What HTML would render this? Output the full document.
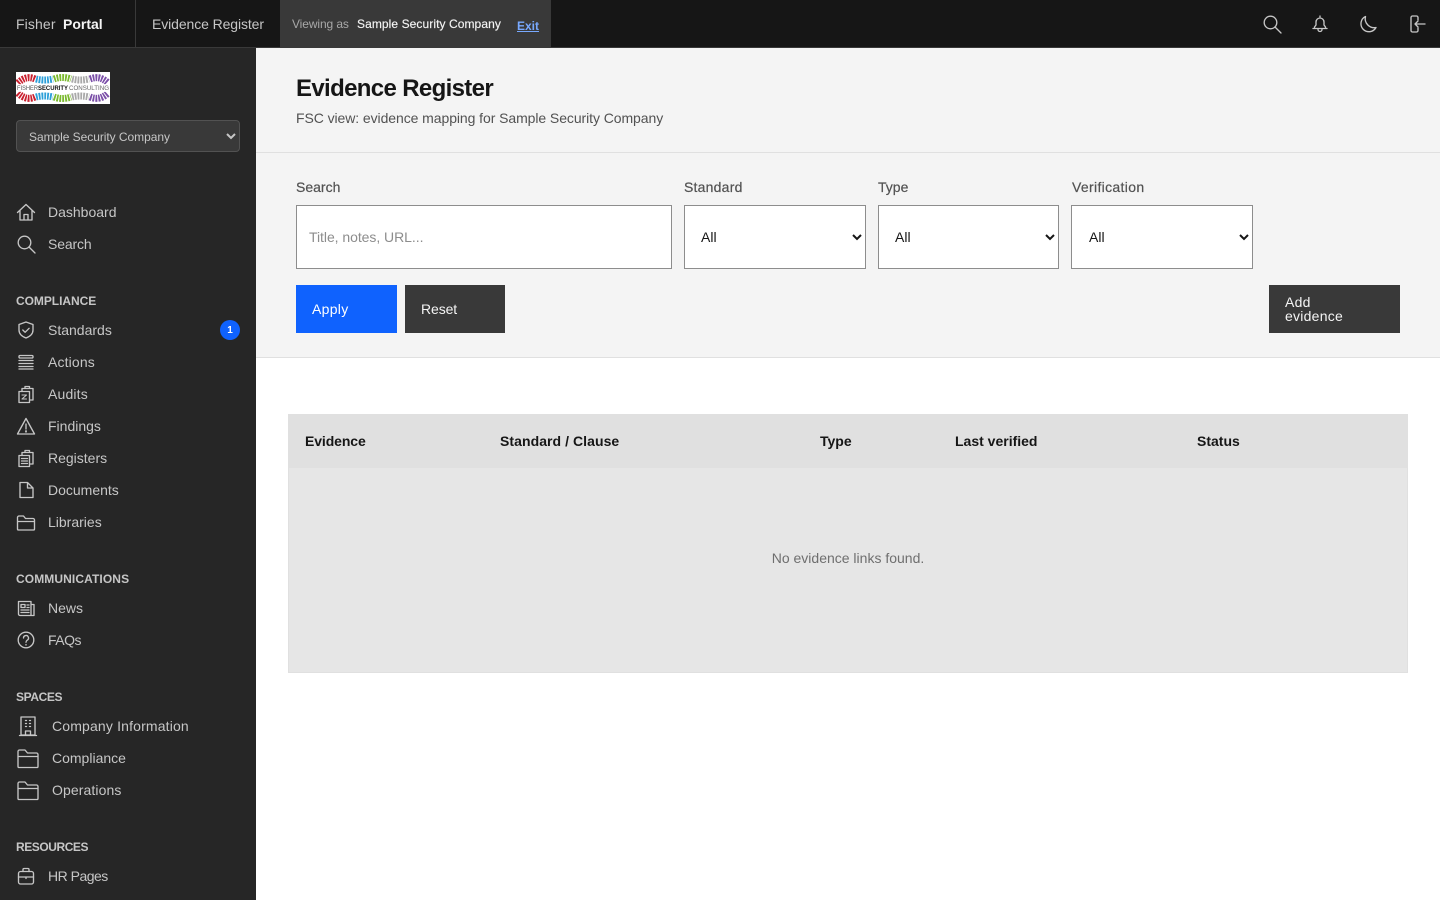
<!DOCTYPE html>
<html lang="en"><head><meta charset="utf-8"><title>Evidence Register</title>
<style>
*{box-sizing:border-box}
html,body{margin:0;padding:0;width:1440px;height:900px;overflow:hidden;background:#fff;font-family:"Liberation Sans",sans-serif}
.t{position:absolute;white-space:nowrap;line-height:18px}
.box{position:absolute}
#top{position:absolute;left:0;top:0;width:1440px;height:48px;background:#161616;border-bottom:1px solid #393939}
#side{position:absolute;left:0;top:48px;width:256px;height:852px;background:#262626}
.n{color:#c6c6c6;font-size:14px}
.h{color:#c6c6c6;font-size:12px;font-weight:bold}
.l{color:#525252;font-size:14px;-webkit-text-stroke:.2px #525252}
.th{color:#161616;font-size:14px;font-weight:bold}
svg.i{position:absolute;fill:none;stroke:#c6c6c6;stroke-width:1.35;stroke-linejoin:round;stroke-linecap:round}
select.f{position:absolute;top:205px;height:64px;background:#fff;border:1px solid #8d8d8d;border-radius:0;font:14px "Liberation Sans",sans-serif;color:#161616;padding:0 0 0 12px;margin:0}
</style></head><body>
<div id="top"></div>
<div class="box" style="left:135px;top:0;width:1px;height:47px;background:#393939"></div>
<div class="t" style="left:16px;top:15px;font-size:14px;color:#c6c6c6;letter-spacing:.12px">Fisher</div>
<div class="t" style="left:63px;top:15px;font-size:14px;color:#f4f4f4;font-weight:bold">Portal</div>
<div class="t" style="left:152px;top:15px;font-size:14px;color:#c6c6c6;letter-spacing:-.1px">Evidence Register</div>
<div class="box" style="left:280px;top:0;width:271px;height:47px;background:#393939"></div>
<div class="t" style="left:292px;top:15px;font-size:12px;color:#a8a8a8;letter-spacing:-.1px">Viewing as</div>
<div class="t" style="left:357px;top:15px;font-size:12px;color:#f4f4f4;letter-spacing:.08px;-webkit-text-stroke:.15px #f4f4f4">Sample Security Company</div>
<div class="t" style="left:517px;top:17px;font-size:12px;color:#78a9ff;font-weight:bold;text-decoration:underline">Exit</div>

<svg class="i" style="left:1262px;top:14px" width="20" height="20" viewBox="0 0 20 20"><circle cx="8.500" cy="8.500" r="6.300"/><path d="M13 13l6 6"/></svg>
<svg class="i" style="left:1310px;top:14px" width="20" height="20" viewBox="0 0 20 20"><path d="M3 14.500h14M4.500 14.500V13l1.500-2V8a4 4 0 0 1 8 0v3l1.500 2v1.500M8 14.500v1a2 2 0 0 0 4 0v-1M10 4V2"/></svg>
<svg class="i" style="left:1358px;top:14px" width="20" height="20" viewBox="0 0 20 20"><path d="M7.500 2.500A8 8 0 1 0 18 13.500 9 9 0 0 1 7.500 2.500z"/></svg>
<svg class="i" style="left:1407px;top:14px" width="20" height="20" viewBox="0 0 20 20"><path d="M11 6V3.500a1.500 1.500 0 0 0-1.500-1.500h-4A1.500 1.500 0 0 0 4 3.500v13A1.500 1.500 0 0 0 5.500 18h4a1.500 1.500 0 0 0 1.500-1.500V14M18 10H8M11 7l-3 3 3 3"/></svg>

<div id="side"></div>
<svg class="box" style="left:16px;top:72px" width="94" height="32" viewBox="0 0 94 32">
<rect width="94" height="32" fill="#fff"/>
<g fill="none" stroke-width="7" stroke-dasharray="1.800 1">
<path d="M2 11Q10 3 19 7" stroke="#c9202f"/><path d="M20 7Q28 9 37 7" stroke="#2c9fd8"/><path d="M38 7Q46 4 55 7" stroke="#7ab92d"/><path d="M56 7Q64 9 73 7" stroke="#a9a9a9"/><path d="M74 7Q84 3 92 11" stroke="#7b4fa8"/>
<path d="M2 21Q10 29 19 25" stroke="#c9202f"/><path d="M20 25Q28 23 37 25" stroke="#2c9fd8"/><path d="M38 25Q46 28 55 25" stroke="#7ab92d"/><path d="M56 25Q64 23 73 25" stroke="#a9a9a9"/><path d="M74 25Q84 29 92 21" stroke="#7b4fa8"/>
</g>
<rect x="0" y="12" width="94" height="8" fill="#fff" opacity=".82"/>
<text x="1" y="18" font-family="Liberation Sans" font-size="6.200" fill="#555" textLength="21" lengthAdjust="spacingAndGlyphs">FISHER</text>
<text x="22" y="18" font-family="Liberation Sans" font-size="6.200" font-weight="bold" fill="#111" textLength="30" lengthAdjust="spacingAndGlyphs">SECURITY</text>
<text x="53" y="18" font-family="Liberation Sans" font-size="6.200" fill="#666" textLength="40" lengthAdjust="spacingAndGlyphs">CONSULTING</text>
</svg>
<select style="position:absolute;left:16px;top:120px;width:224px;height:32px;background:#393939;border:1px solid #525252;border-radius:4px;color:#c6c6c6;font:12px 'Liberation Sans',sans-serif;letter-spacing:-.05px;padding:1px 0 0 8px;margin:0"><option>Sample Security Company</option></select>

<svg class="i" style="left:16px;top:202px" width="20" height="20" viewBox="0 0 20 20"><path d="M1.500 10.500L10 2.500l8.500 8M4 8.500V18h12V8.500M8 18v-5.500h4V18"/></svg>
<div class="t n" style="left:48px;top:203px">Dashboard</div>
<svg class="i" style="left:16px;top:234px" width="20" height="20" viewBox="0 0 20 20"><circle cx="8.500" cy="8.500" r="6.300"/><path d="M13 13l6 6"/></svg>
<div class="t n" style="left:48px;top:235px;letter-spacing:-.15px">Search</div>

<div class="t h" style="left:16px;top:292px;letter-spacing:-.05px">COMPLIANCE</div>
<svg class="i" style="left:16px;top:320px" width="20" height="20" viewBox="0 0 20 20"><path d="M10 2l7 2.500V10c0 4-3 6.500-7 8-4-1.500-7-4-7-8V4.500zM6.800 10l2.300 2.300 4-4"/></svg>
<div class="t n" style="left:48px;top:321px">Standards</div>
<div class="box" style="left:220px;top:320px;width:20px;height:20px;border-radius:50%;background:#0f62fe;color:#fff;font-size:10px;font-weight:bold;text-align:center;line-height:21px">1</div>
<svg class="i" style="left:16px;top:352px" width="20" height="20" viewBox="0 0 20 20"><rect x="3" y="3.500" width="14" height="2.500" rx="1"/><path d="M3 8.500h14M3 11.500h14M3 14.500h14M3 17h14"/></svg>
<div class="t n" style="left:48px;top:353px;letter-spacing:.14px">Actions</div>
<svg class="i" style="left:16px;top:384px" width="20" height="20" viewBox="0 0 20 20"><path d="M3 7.500h10.500v11H3zM6 7.500V4.500h11v11.500h-3.500M9 4.500V2.500h4.500v2"/><path d="M6 11h4.500L6 15h4.500" stroke-width="1.100"/></svg>
<div class="t n" style="left:48px;top:385px;letter-spacing:.16px">Audits</div>
<svg class="i" style="left:16px;top:416px" width="20" height="20" viewBox="0 0 20 20"><path d="M10 2.500L1.500 18h17zM10 8v5"/><path d="M10 15v.8" stroke-width="1.800"/></svg>
<div class="t n" style="left:48px;top:417px">Findings</div>
<svg class="i" style="left:16px;top:448px" width="20" height="20" viewBox="0 0 20 20"><path d="M3 7.500h10.500v11H3zM6 7.500V4.500h11v11.500h-3.500M9 4.500V2.500h4.500v2M5.500 10.500h6M5.500 13h6M5.500 15.500h6"/></svg>
<div class="t n" style="left:48px;top:449px">Registers</div>
<svg class="i" style="left:16px;top:480px" width="20" height="20" viewBox="0 0 20 20"><path d="M4 2.500h7.500L17 8v9.500H4zM11.500 2.500V8H17"/></svg>
<div class="t n" style="left:48px;top:481px">Documents</div>
<svg class="i" style="left:16px;top:512px" width="20" height="20" viewBox="0 0 20 20"><path d="M1.500 8.500V5.500A1.500 1.500 0 0 1 3 4h4.500l2 2.500H17A1.500 1.500 0 0 1 18.500 8v9a1 1 0 0 1-1 1h-15a1 1 0 0 1-1-1zM1.500 9.500h17"/></svg>
<div class="t n" style="left:48px;top:513px">Libraries</div>

<div class="t h" style="left:16px;top:570px;letter-spacing:.1px">COMMUNICATIONS</div>
<svg class="i" style="left:16px;top:598px" width="20" height="20" viewBox="0 0 20 20"><path d="M2.500 3.500h12.500v14H4a1.500 1.500 0 0 1-1.500-1.500zM15 6.500h3v11h-3M5 6.500h4v3H5zM11 7h2M11 9.500h2M5 12h8M5 14.500h8"/></svg>
<div class="t n" style="left:48px;top:599px">News</div>
<svg class="i" style="left:16px;top:630px" width="20" height="20" viewBox="0 0 20 20"><circle cx="10" cy="10" r="7.800"/><path d="M7.500 8a2.500 2.500 0 1 1 3.700 2.200c-.8.500-1.200 1-1.200 2M10 14.500v.5"/></svg>
<div class="t n" style="left:48px;top:631px;letter-spacing:-.5px">FAQs</div>

<div class="t h" style="left:16px;top:688px;letter-spacing:-.38px">SPACES</div>
<svg class="i" style="left:16px;top:714px" width="24" height="24" viewBox="0 0 24 24"><path d="M5 3h14v18H5zM3.500 21.500h17M9.500 21v-4h5v4M9.500 6.500h1M13.500 6.500h1M9.500 9.500h1M13.500 9.500h1M9.500 12.500h1M13.500 12.500h1"/></svg>
<div class="t n" style="left:52px;top:717px;letter-spacing:.16px">Company Information</div>
<svg class="i" style="left:16px;top:746px" width="24" height="24" viewBox="0 0 24 24"><path d="M2 10V5.500A1.500 1.500 0 0 1 3.500 4h5.500l2.500 3h9A1.500 1.500 0 0 1 22 8.500v12a1 1 0 0 1-1 1H3a1 1 0 0 1-1-1zM2 10.500h20"/></svg>
<div class="t n" style="left:52px;top:749px">Compliance</div>
<svg class="i" style="left:16px;top:778px" width="24" height="24" viewBox="0 0 24 24"><path d="M2 10V5.500A1.500 1.500 0 0 1 3.500 4h5.500l2.500 3h9A1.500 1.500 0 0 1 22 8.500v12a1 1 0 0 1-1 1H3a1 1 0 0 1-1-1zM2 10.500h20"/></svg>
<div class="t n" style="left:52px;top:781px;letter-spacing:.1px">Operations</div>

<div class="t h" style="left:16px;top:838px;letter-spacing:-.44px">RESOURCES</div>
<svg class="i" style="left:16px;top:866px" width="20" height="20" viewBox="0 0 20 20"><rect x="2.500" y="5.500" width="15" height="12.500" rx="2"/><path d="M7 5.500V3.500a1 1 0 0 1 1-1h4a1 1 0 0 1 1 1v2M2.500 11h15M10 11v1.500"/></svg>
<div class="t n" style="left:48px;top:867px;letter-spacing:-.5px">HR Pages</div>

<div class="box" style="left:256px;top:48px;width:1184px;height:105px;background:#f4f4f4;border-bottom:1px solid #e0e0e0"></div>
<div class="t" style="left:296px;top:74px;font-size:24px;line-height:30px;font-weight:bold;color:#161616;letter-spacing:-.65px">Evidence Register</div>
<div class="t" style="left:296px;top:109px;font-size:14px;color:#525252;letter-spacing:-.075px">FSC view: evidence mapping for Sample Security Company</div>

<div class="box" style="left:256px;top:153px;width:1184px;height:205px;background:#f4f4f4;border-bottom:1px solid #e0e0e0"></div>
<div class="t l" style="left:296px;top:178px">Search</div>
<div class="t l" style="left:684px;top:178px;letter-spacing:.22px">Standard</div>
<div class="t l" style="left:878px;top:178px">Type</div>
<div class="t l" style="left:1072px;top:178px;letter-spacing:.33px">Verification</div>
<div class="box" style="left:296px;top:205px;width:376px;height:64px;background:#fff;border:1px solid #8d8d8d"></div>
<div class="t" style="left:309px;top:228px;font-size:14px;color:#8d8d8d;letter-spacing:-.05px">Title, notes, URL...</div>
<select class="f" style="left:684px;width:182px"><option>All</option></select>
<select class="f" style="left:878px;width:181px"><option>All</option></select>
<select class="f" style="left:1071px;width:182px;padding-left:13px"><option>All</option></select>
<div class="box" style="left:296px;top:285px;width:101px;height:48px;background:#0f62fe"></div>
<div class="t" style="left:312px;top:300px;font-size:14px;color:#fff;letter-spacing:.3px">Apply</div>
<div class="box" style="left:405px;top:285px;width:100px;height:48px;background:#393939"></div>
<div class="t" style="left:421px;top:300px;font-size:14px;color:#f4f4f4;letter-spacing:-.1px">Reset</div>
<div class="box" style="left:1269px;top:285px;width:131px;height:48px;background:#393939"></div>
<div class="t" style="left:1285px;top:295px;font-size:14px;line-height:14px;color:#f4f4f4;letter-spacing:.25px">Add<br>evidence</div>

<div class="box" style="left:288px;top:414px;width:1120px;height:259px;background:#e6e6e6;border:1px solid #e0e0e0;border-top:0"></div>
<div class="box" style="left:288px;top:414px;width:1120px;height:54px;background:#e0e0e0"></div>
<div class="t th" style="left:305px;top:432px;letter-spacing:-.1px">Evidence</div>
<div class="t th" style="left:500px;top:432px;letter-spacing:.06px">Standard / Clause</div>
<div class="t th" style="left:820px;top:432px">Type</div>
<div class="t th" style="left:955px;top:432px">Last verified</div>
<div class="t th" style="left:1197px;top:432px">Status</div>
<div class="t" style="left:288px;top:549px;width:1120px;text-align:center;font-size:14px;color:#6f6f6f">No evidence links found.</div>
</body></html>
